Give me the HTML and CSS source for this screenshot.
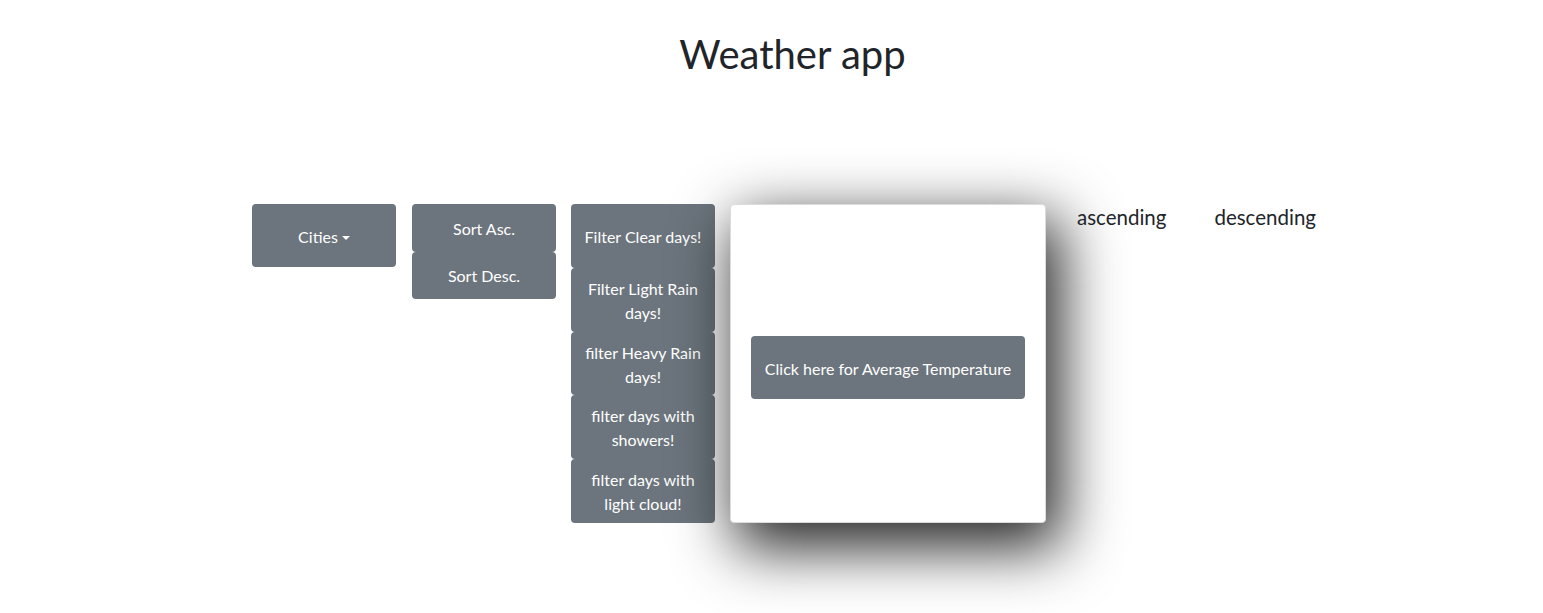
FILE: index.html
```html
<!DOCTYPE html>
<html lang="en">
<head>
<meta charset="utf-8">
<title>Weather app</title>
<link rel="stylesheet" href="styles.css">
</head>
<body>
  <h1 class="title">Weather app</h1>
  <div class="row">
    <div class="col">
      <button class="btn btn-tall">Cities<span class="caret"></span></button>
    </div>
    <div class="col stack">
      <button class="btn btn-sort">Sort Asc.</button>
      <button class="btn btn-sort">Sort Desc.</button>
    </div>
    <div class="col stack">
      <button class="btn btn-tall">Filter Clear days!</button>
      <button class="btn btn-tall">Filter Light Rain days!</button>
      <button class="btn btn-tall">filter Heavy Rain days!</button>
      <button class="btn btn-tall">filter days with showers!</button>
      <button class="btn btn-tall">filter days with light cloud!</button>
    </div>
    <div class="card">
      <button class="btn btn-avg">Click here for Average Temperature</button>
    </div>
    <div class="labels">
      <span class="label">ascending</span>
      <span class="label">descending</span>
    </div>
  </div>
</body>
</html>
```

FILE: styles.css
```css
html, body {
  margin: 0;
  padding: 0;
  background: #fff;
}
body {
  min-height: 100vh;
  font-family: Lato, "Noto Sans", sans-serif;
  color: #212529;
  font-size: 16px;
  line-height: 1.5;
}
.title {
  margin: 30px 0 0;
  padding-left: 42px;
  text-align: center;
  font-size: 40px;
  font-weight: 400;
  line-height: 1.2;
}
.row {
  display: flex;
  align-items: flex-start;
  margin-top: 126px;
  padding-left: 252px;
}
.col {
  width: 144px;
  margin-right: 15px;
  flex: none;
}
.col:first-child {
  margin-right: 16px;
}
.stack {
  display: flex;
  flex-direction: column;
}
.btn {
  display: block;
  width: 144px;
  border: 0;
  border-radius: 4px;
  background: #6c757d;
  color: #fff;
  font-family: inherit;
  font-size: 16px;
  line-height: 24px;
  padding: 9px 12px 7px;
  text-align: center;
  cursor: pointer;
}
.btn-tall {
  height: 63.8px;
}
.col:first-child .btn-tall {
  height: 63px;
}
.btn-sort {
  height: 47.5px;
}
.caret {
  display: inline-block;
  width: 0;
  height: 0;
  margin-left: 4px;
  vertical-align: 3px;
  border-top: 4px solid #fff;
  border-left: 4px solid transparent;
  border-right: 4px solid transparent;
}
.card {
  flex: none;
  box-sizing: border-box;
  width: 316px;
  height: 319px;
  padding-top: 8px;
  border: 1px solid #dcdcdc;
  border-radius: 4px;
  background: #fff;
  box-shadow: 10px 20px 60px 5px rgba(0, 0, 0, 0.85);
  display: flex;
  align-items: center;
  justify-content: center;
}
.btn-avg {
  width: 274px;
  height: 63px;
}
.labels {
  display: flex;
  gap: 48px;
  margin-left: 31px;
  font-size: 20.5px;
  line-height: 27px;
}
```
